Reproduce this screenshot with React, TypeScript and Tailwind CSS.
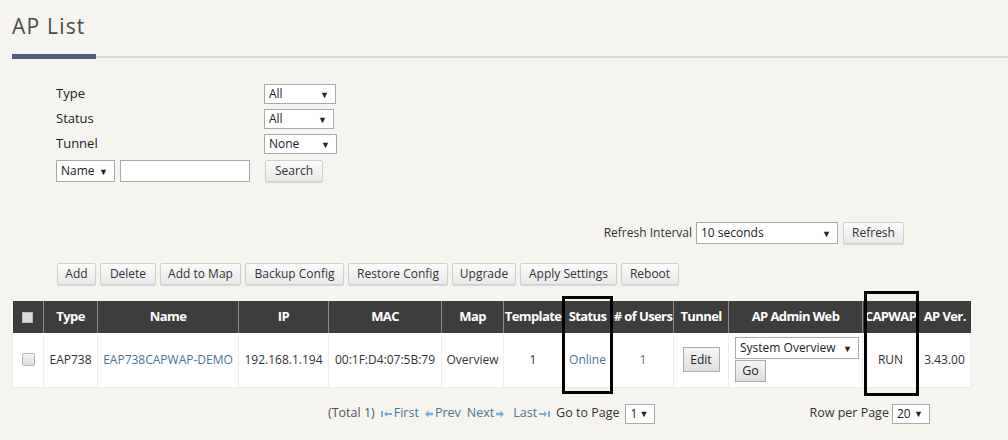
import React from 'react';

const font = { fontFamily: '"Open Sans", "Liberation Sans", sans-serif' };

function Select({ value, width, className = '' }: { value: string; width: string; className?: string }) {
  return (
    <div
      className={`flex items-center justify-between h-[20px] border border-[#a9a9a9] bg-white pl-[4px] pr-[6px] text-[12px] text-[#222] ${width} ${className}`}
    >
      <span className="whitespace-nowrap">{value}</span>
      <span className="text-[9px] leading-none">▼</span>
    </div>
  );
}

function Button({ label, className = '' }: { label: string; className?: string }) {
  return (
    <div
      className={`flex items-center justify-center h-[22px] px-[4px] whitespace-nowrap rounded-[2px] border border-[#cfcfcf] bg-gradient-to-b from-[#fbfbfb] to-[#e9e9e9] text-[12px] text-[#333] shadow-[0_1px_1px_rgba(0,0,0,0.12)] ${className}`}
    >
      {label}
    </div>
  );
}

const columns = [
  { label: '', w: 'w-[31px]' },
  { label: 'Type', w: 'w-[54px]' },
  { label: 'Name', w: 'w-[141px]' },
  { label: 'IP', w: 'w-[90px]' },
  { label: 'MAC', w: 'w-[113px]' },
  { label: 'Map', w: 'w-[62px]' },
  { label: 'Template', w: 'w-[59px]' },
  { label: 'Status', w: 'w-[50px]' },
  { label: '# of Users', w: 'w-[61px]' },
  { label: 'Tunnel', w: 'w-[55px]' },
  { label: 'AP Admin Web', w: 'w-[134px]' },
  { label: 'CAPWAP', w: 'w-[56px]' },
  { label: 'AP Ver.', w: 'w-[52px]' },
];

function ArrowFirst() {
  return (
    <svg width="12" height="8" viewBox="0 0 12 8" className="inline-block mr-[1px]">
      <rect x="0" y="1" width="2" height="6" fill="#7aaed6" />
      <path d="M3 4 L6 1 L6 3 L11 3 L11 5 L6 5 L6 7 Z" fill="#7aaed6" />
    </svg>
  );
}
function ArrowPrev() {
  return (
    <svg width="9" height="8" viewBox="0 0 9 8" className="inline-block mr-[1px]">
      <path d="M0 4 L3.5 0.5 L3.5 2.8 L8 2.8 L8 5.2 L3.5 5.2 L3.5 7.5 Z" fill="#7aaed6" />
    </svg>
  );
}
function ArrowNext() {
  return (
    <svg width="9" height="8" viewBox="0 0 9 8" className="inline-block ml-[1px]">
      <path d="M9 4 L5.5 0.5 L5.5 2.8 L1 2.8 L1 5.2 L5.5 5.2 L5.5 7.5 Z" fill="#7aaed6" />
    </svg>
  );
}
function ArrowLast() {
  return (
    <svg width="12" height="8" viewBox="0 0 12 8" className="inline-block ml-[1px]">
      <path d="M9 4 L6 1 L6 3 L1 3 L1 5 L6 5 L6 7 Z" fill="#7aaed6" />
      <rect x="10" y="1" width="2" height="6" fill="#7aaed6" />
    </svg>
  );
}

export default function App() {
  return (
    <div className="w-[1008px] h-[440px] overflow-hidden bg-[#f5f4ef] text-[#333]" style={font}>
      {/* Title */}
      <div className="pl-[12px] pt-[11px] h-[45px] text-[21px] tracking-[1.2px] text-[#4a4a4a] leading-[30px]">
        AP List
      </div>
      <div className="flex items-center pl-[12px] h-[5px] mt-[9px]">
        <div className="w-[84px] h-[5px] bg-[#535a80]" />
        <div className="flex-1 h-[2px] bg-[#d6d6d4]" />
      </div>

      {/* Filters */}
      <div className="ml-[56px] mt-[25px] grid grid-cols-[208px_auto] gap-y-[5px] text-[13px] text-[#222] items-center">
        <div>Type</div>
        <Select value="All" width="w-[72px]" />
        <div>Status</div>
        <Select value="All" width="w-[70px]" />
        <div>Tunnel</div>
        <Select value="None" width="w-[73px]" />
      </div>
      <div className="ml-[56px] mt-[6px] flex items-center h-[22px]">
        <Select value="Name" width="w-[59px]" className="h-[22px]" />
        <div className="ml-[5px] w-[130px] h-[22px] border border-[#a9a9a9] bg-white" />
        <Button label="Search" className="ml-[15px] w-[58px]" />
      </div>

      {/* Refresh */}
      <div className="mt-[40px] flex items-center justify-end pr-[104px] h-[22px] text-[12px] text-[#333]">
        <span className="mr-[4px]">Refresh Interval</span>
        <Select value="10 seconds" width="w-[142px]" className="h-[22px] text-[12.5px]" />
        <Button label="Refresh" className="ml-[5px] w-[61px]" />
      </div>

      {/* Action buttons */}
      <div className="mt-[19px] ml-[57px] flex gap-[4px]">
        <Button label="Add" className="w-[39px]" />
        <Button label="Delete" className="w-[56px]" />
        <Button label="Add to Map" className="w-[81px]" />
        <Button label="Backup Config" className="w-[99px]" />
        <Button label="Restore Config" className="w-[100px]" />
        <Button label="Upgrade" className="w-[64px]" />
        <Button label="Apply Settings" className="w-[97px]" />
        <Button label="Reboot" className="w-[58px]" />
      </div>

      {/* Table */}
      <div className="relative ml-[12px] mt-[16px] w-[958px]">
        <table className="border-collapse table-fixed w-[958px]">
          <thead>
            <tr className="h-[32px] bg-[#3d3d3d] text-white">
              {columns.map((c, i) => (
                <th
                  key={i}
                  className={`${c.w} p-0 text-[13px] font-bold tracking-[-0.6px] whitespace-nowrap text-center border-l border-[#8a8a8a] first:border-l-0`}
                >
                  {i === 0 ? (
                    <div className="mx-auto w-[11px] h-[11px] bg-[#dcdcdc] border border-[#bbb]" />
                  ) : (
                    c.label
                  )}
                </th>
              ))}
            </tr>
          </thead>
          <tbody>
            <tr className="h-[54px] bg-white text-[12px] text-[#333] border-b border-[#ebebeb]">
              <td className="p-0 text-center border-l border-[#eee]">
                <div className="mx-auto w-[13px] h-[13px] rounded-[2px] border border-[#b5b5b5] bg-gradient-to-b from-[#f4f4f4] to-[#dcdcdc]" />
              </td>
              <td className="p-0 text-center border-l border-[#eee]">EAP738</td>
              <td className="p-0 text-center border-l border-[#eee] text-[#4b7594]">EAP738CAPWAP-DEMO</td>
              <td className="p-0 text-center border-l border-[#eee]">192.168.1.194</td>
              <td className="p-0 text-center border-l border-[#eee]">00:1F:D4:07:5B:79</td>
              <td className="p-0 text-center border-l border-[#eee]">Overview</td>
              <td className="p-0 text-center border-l border-[#eee]">1</td>
              <td className="p-0 text-center border-l border-[#eee] text-[#4b7594]">Online</td>
              <td className="p-0 text-center border-l border-[#eee] text-[#4b7594]">1</td>
              <td className="p-0 text-center border-l border-[#eee]">
                <div className="mx-auto w-[37px] h-[25px] flex items-center justify-center border border-[#aaa] bg-gradient-to-b from-[#f6f6f6] to-[#dedede] text-[12px] text-[#222]">
                  Edit
                </div>
              </td>
              <td className="p-0 border-l border-[#eee]">
                <div className="pl-[6px] flex flex-col gap-[1px]">
                  <Select value="System Overview" width="w-[124px]" className="h-[22px] text-[12.5px]" />
                  <div className="w-[31px] h-[22px] flex items-center justify-center border border-[#aaa] bg-gradient-to-b from-[#f6f6f6] to-[#dedede] text-[12.5px] text-[#222]">
                    Go
                  </div>
                </div>
              </td>
              <td className="p-0 text-center border-l border-[#eee]">RUN</td>
              <td className="p-0 text-center border-l border-[#eee] border-r">3.43.00</td>
            </tr>
          </tbody>
        </table>
        {/* highlight boxes */}
        <div className="absolute left-[550px] top-[-5px] w-[51px] h-[98px] border-[3px] border-black" />
        <div className="absolute left-[852px] top-[-10px] w-[55px] h-[105px] border-[3px] border-black" />
      </div>

      {/* Pagination */}
      <div className="mt-[15px] flex items-center h-[22px] text-[12.5px]">
        <div className="ml-[328px] flex items-center gap-[6px] text-[#4b7594]">
          <span className="text-[#555]">(Total 1)</span>
          <span className="flex items-center">
            <ArrowFirst />
            First
          </span>
          <span className="flex items-center">
            <ArrowPrev />
            Prev
          </span>
          <span className="flex items-center">
            Next
            <ArrowNext />
          </span>
          <span className="flex items-center ml-[3px]">
            Last
            <ArrowLast />
          </span>
          <span className="text-[#333]">Go to Page</span>
          <Select value="1" width="w-[30px]" />
        </div>
        <div className="ml-[154px] flex items-center gap-[3px] text-[#333]">
          <span>Row per Page</span>
          <Select value="20" width="w-[38px]" />
        </div>
      </div>
    </div>
  );
}
